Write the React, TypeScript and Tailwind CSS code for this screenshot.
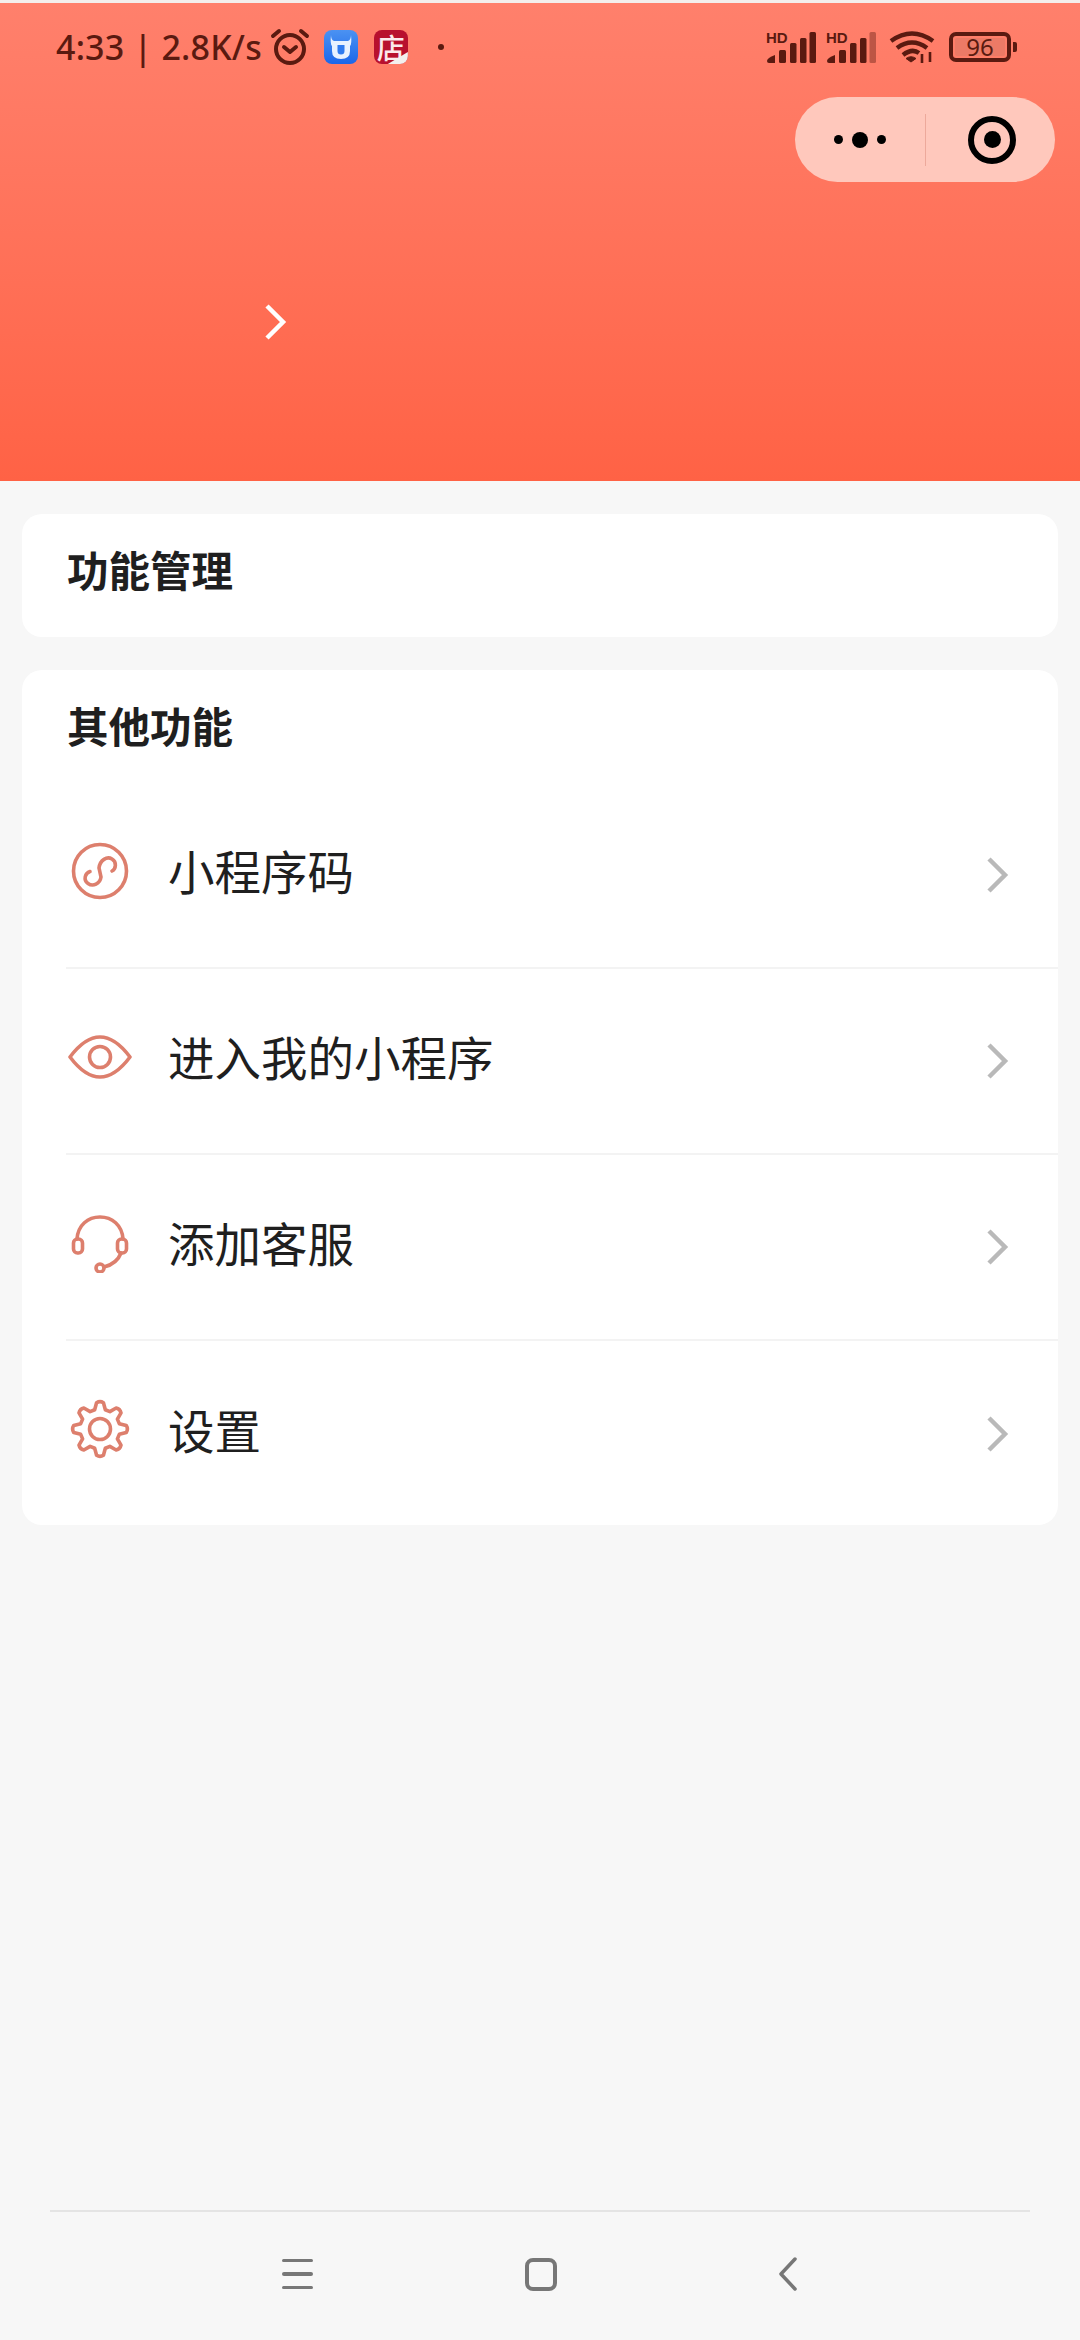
import React from "react";

const gearPath = () => {
  const pts: string[] = [];
  for (let i = 0; i < 8; i++) {
    const a = (i * Math.PI) / 4 - Math.PI / 2;
    const p = (r: number, d: number) => {
      const x = 30 + r * Math.cos(a + d);
      const y = 30 + r * Math.sin(a + d);
      return `${x.toFixed(2)} ${y.toFixed(2)}`;
    };
    pts.push(`${i === 0 ? "M" : "L"}${p(20, -0.27)}`, `L${p(26.5, -0.13)}`, `Q${p(28.5, 0)} ${p(26.5, 0.13)}`, `L${p(20, 0.27)}`);
  }
  return pts.join(" ") + "Z";
};

const MiniIcon = () => (
  <svg width="60" height="60" viewBox="-30 -30 60 60" fill="none" stroke="#dd7f6d" strokeWidth="3.6" strokeLinecap="round">
    <circle cx="0" cy="0" r="26.5" />
    <path d="M-10 0.5 C-15 2 -17 9 -12 12.5 C-7 16 0 13 1 6 L-1 -3 C0 -11 7 -15 12 -12 C17 -9 16 -2 12 0" />
  </svg>
);

const EyeIcon = () => (
  <svg width="64" height="60" viewBox="0 0 64 60" fill="none" stroke="#dd7f6d" strokeWidth="3.6" strokeLinejoin="round">
    <path d="M2 30 Q32 -10 62 30 Q32 70 2 30Z" />
    <circle cx="32" cy="30" r="10.5" />
  </svg>
);

const HeadsetIcon = () => (
  <svg width="60" height="60" viewBox="0 0 60 60" fill="none" stroke="#dd7f6d" strokeWidth="3.6" strokeLinecap="round">
    <path d="M7 26 C8 12 18 4 30 4 C42 4 52 12 53 26" />
    <rect x="3.5" y="26" width="9" height="14" rx="4" />
    <rect x="47.5" y="26" width="9" height="14" rx="4" />
    <path d="M51 40 C48 48 42 52 34 54" />
    <circle cx="30" cy="55" r="4" />
  </svg>
);

const GearIcon = () => (
  <svg width="60" height="60" viewBox="0 0 60 60" fill="none" stroke="#dd7f6d" strokeWidth="3.6" strokeLinejoin="round">
    <path d={gearPath()} />
    <circle cx="30" cy="30" r="10.5" />
  </svg>
);

const Chevron = ({ color, width = 4.5 }: { color: string; width?: number }) => (
  <svg width="22" height="36" viewBox="0 0 22 36" fill="none" stroke={color} strokeWidth={width}>
    <path d="M2 2 L18 18 L2 34" />
  </svg>
);

// lit = how many bars are at full strength
const Signal = ({ lit }: { lit: number }) => (
  <div className="relative w-[50px] h-[31px]">
    <span className="absolute left-0 top-0 text-[15px] leading-[12px] font-bold text-[#5a1a10] font-['Liberation_Sans',sans-serif]">HD</span>
    <svg className="absolute left-0 top-0" width="50" height="31" viewBox="0 0 50 31" fill="#5a1a10">
      <path d="M3 31 q-2 0 -2 -2 q0 -3 8 -6 v8z" />
      <rect x="13" y="18" width="7" height="13" rx="1.5" />
      <rect x="24" y="11" width="6.5" height="20" rx="1.5" opacity={lit < 3 ? 0.4 : 1} />
      <rect x="34" y="6" width="6.5" height="25" rx="1.5" opacity={lit < 4 ? 0.4 : 1} />
      <rect x="43.5" y="0" width="6.5" height="31" rx="1.5" opacity={lit < 5 ? 0.4 : 1} />
    </svg>
  </div>
);

const rows = [
  { icon: <MiniIcon />, label: "小程序码", shift: "-translate-y-[4px]" },
  { icon: <EyeIcon />, label: "进入我的小程序", shift: "-translate-y-[4px]" },
  { icon: <HeadsetIcon />, label: "添加客服", shift: "-translate-y-[4px]" },
  { icon: <GearIcon />, label: "设置", shift: "-translate-y-[5px]" },
];

export default function App() {
  return (
    <div className="w-[1080px] h-[2340px] bg-[#f7f7f7] flex flex-col overflow-hidden font-['Noto_Sans_CJK_SC',sans-serif]">
      <div className="h-[3px] bg-[#f4efed]" />
      <header className="h-[478px] bg-gradient-to-b from-[#ff806c] to-[#ff6245] flex flex-col">
        {/* status bar */}
        <div className="flex items-center justify-between h-[60px] mt-[14px] pl-[56px] pr-[63px]">
          <div className="flex items-center">
            <span className="text-[34px] leading-[44px] font-medium tracking-[0.2px] text-[#5a1a10] font-['Noto_Sans',sans-serif] mr-[8px] whitespace-nowrap">4:33 | 2.8K/s</span>
            <svg width="40" height="38" viewBox="0 0 40 38" fill="none" stroke="#5a1a10" strokeWidth="4" strokeLinecap="round" strokeLinejoin="round">
              <circle cx="20" cy="21" r="14" />
              <path d="M14 19 L20 24 L26 19" />
              <path d="M3 8 L9 3 M37 8 L31 3" />
            </svg>
            <div className="ml-[14px] w-[34px] h-[34px] rounded-[8px] bg-gradient-to-b from-[#4b92f2] to-[#1a66ea] flex items-center justify-center">
              <svg width="26" height="26" viewBox="0 0 26 26" fill="#e8f2ff">
                <path d="M3 1 Q3 6 6 7 H20 Q23 6 23 1 Q24 10 22 12 V17 Q22 25 13 25 Q4 25 4 17 V12 Q2 10 3 1Z" />
                <path d="M9.5 11 H16.5 V17 Q16.5 20.5 13 20.5 Q9.5 20.5 9.5 17Z" fill="#2f7bef" />
              </svg>
            </div>
            <div className="relative ml-[16px] w-[34px] h-[34px] rounded-[8px] bg-[#b8102e] flex items-center justify-center">
              <span className="text-[28px] leading-none font-medium text-[#fbe9ec]">店</span>
              <div className="absolute right-0 bottom-0 w-[20px] h-[12px] rounded-br-[8px] bg-[#f3f0ee] [clip-path:polygon(100%_0,100%_100%,0_100%)]" />
            </div>
            <div className="ml-[30px] w-[6px] h-[6px] rounded-full bg-[#5a1a10]" />
          </div>
          <div className="flex items-center">
            <Signal lit={5} />
            <div className="ml-[10px]">
              <Signal lit={4} />
            </div>
            <svg className="ml-[13px]" width="46" height="32" viewBox="0 0 46 32" fill="none" stroke="#5a1a10" strokeWidth="4.5">
              <path d="M2 10 Q23 -5 44 10" />
              <path d="M8 17 Q23 6 38 17" />
              <path d="M14 24 Q23 17 30 22" />
              <path d="M22 31 L17 27.5 Q22 24 27 27.5Z" fill="#5a1a10" strokeWidth="1" />
              <path d="M33 23 V32 M41 21 V31" strokeWidth="2.6" />
            </svg>
            <div className="relative ml-[14px] w-[62px] h-[30px] rounded-[7px] border-[4px] border-[#5a1a10] p-[2px]">
              <div className="h-full w-full bg-[#ec7a66] rounded-[2px]" />
              <span className="absolute inset-0 flex items-center justify-center text-[24px] leading-none text-[#5a1a10] font-['Noto_Sans',sans-serif]">96</span>
            </div>
            <div className="ml-[2px] w-[4px] h-[10px] rounded-r-[2px] bg-[#5a1a10]" />
          </div>
        </div>
        {/* capsule */}
        <div className="flex justify-end pr-[25px] mt-[20px]">
          <div className="w-[260px] h-[85px] rounded-full bg-[#ffc8bc] flex items-center">
            <div className="w-[130px] flex items-center justify-center gap-[9px]">
              <span className="w-[9px] h-[9px] rounded-full bg-black" />
              <span className="w-[16px] h-[16px] rounded-full bg-black" />
              <span className="w-[9px] h-[9px] rounded-full bg-black" />
            </div>
            <div className="w-px h-[52px] bg-[#eda99b]" />
            <div className="flex-1 flex items-center justify-center pl-[3px]">
              <div className="w-[48px] h-[48px] rounded-full border-[6px] border-black flex items-center justify-center">
                <span className="w-[17px] h-[17px] rounded-full bg-black" />
              </div>
            </div>
          </div>
        </div>
        <div className="pl-[265px] mt-[122px]">
          <Chevron color="#ffffff" />
        </div>
      </header>

      <main className="flex-1 px-[22px] pt-[33px] flex flex-col gap-[33px]">
        <section className="h-[123px] bg-white rounded-[20px] pl-[45px] pt-[27px]">
          <h2 className="text-[41.5px] leading-[56px] font-bold text-[#1f1f1f]">功能管理</h2>
        </section>
        <section className="h-[855px] bg-white rounded-[20px] flex flex-col">
          <h2 className="h-[113px] shrink-0 pl-[45px] pt-[27px] text-[41.5px] leading-[56px] font-bold text-[#1f1f1f]">其他功能</h2>
          <ul className="flex flex-col pl-[44px]">
            {rows.map((row, i) => (
              <li key={row.label} className={`h-[186px] shrink-0 flex items-center pr-[49px] ${i < 3 ? "border-b-2 border-[#f3f3f3]" : ""}`}>
                <div className={`w-[68px] flex justify-center ${row.shift}`}>{row.icon}</div>
                <span className="ml-[34px] text-[46.5px] leading-none text-[#1f1f1f] flex-1 -translate-y-[5px]">{row.label}</span>
                <Chevron color="#b9b9b9" />
              </li>
            ))}
          </ul>
        </section>
      </main>

      {/* nav bar */}
      <nav className="mx-[50px] h-[130px] pb-[4px] border-t-2 border-[#e4e4e4] flex items-center">
        <div className="w-[31px] ml-[232px] flex flex-col gap-[10px]">
          <span className="h-[3.5px] rounded-full bg-[#777777]" />
          <span className="h-[3.5px] rounded-full bg-[#777777]" />
          <span className="h-[3.5px] rounded-full bg-[#777777]" />
        </div>
        <div className="ml-[212px] w-[32px] h-[33px] rounded-[8px] border-[4px] border-[#777777]" />
        <svg className="ml-[222px]" width="18" height="34" viewBox="0 0 18 34" fill="none" stroke="#777777" strokeWidth="3.5" strokeLinecap="round" strokeLinejoin="round">
          <path d="M16 2 L2 17 L16 32" />
        </svg>
      </nav>
    </div>
  );
}
